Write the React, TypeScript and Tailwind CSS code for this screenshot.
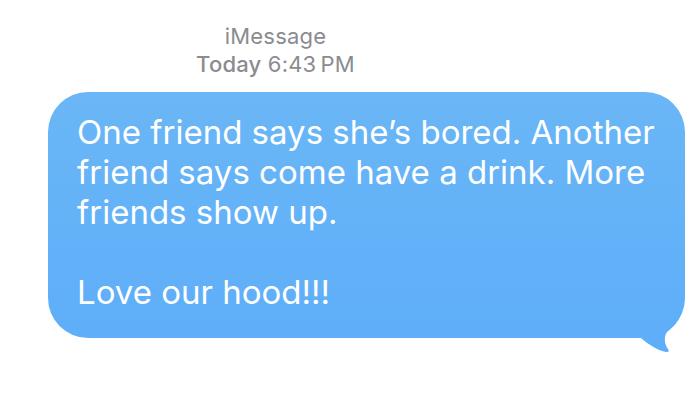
function BubbleTail() {
  return (
    <svg
      className="absolute left-[580px] top-[190px]"
      width="60"
      height="75"
      viewBox="0 0 60 75"
    >
      <defs>
        <linearGradient
          id="tailFill"
          gradientUnits="userSpaceOnUse"
          x1="0"
          y1="-190"
          x2="0"
          y2="56"
        >
          <stop offset="0" stopColor="#6ab6f6" />
          <stop offset="1" stopColor="#5eaef9" />
        </linearGradient>
      </defs>
      <path
        d="M0 0 H57 V8 C57 30 50 42 39 50 C36 54 36 62 40 67 C41.5 69 40.5 70.5 38 70 C30 68.5 21 63 13 56 H0 Z"
        fill="url(#tailFill)"
      />
    </svg>
  );
}

export default function App() {
  return (
    <div className="min-h-screen w-full bg-white font-['Inter',sans-serif]">
      <div className="flex w-[551px] flex-col items-center pt-[22px] text-[22px] leading-[28px] tracking-[0.2px] text-[#8b8b90]">
        <div>iMessage</div>
        <div>
          <span className="font-medium">Today</span> 6:43&#8201;PM
        </div>
      </div>
      <div className="relative ml-[48px] mt-[14px] h-[246px] w-[637px] rounded-[40px] bg-gradient-to-b from-[#6ab6f6] to-[#5eaef9] pl-[29px] pr-[20px] pt-[20px] text-[33px] leading-[40px] text-white">
        <BubbleTail />
        <p className="relative">
          One friend says she’s bored. Another friend says come have a drink.
          More friends show up.
        </p>
        <p className="relative mt-[40px]">Love our hood!!!</p>
      </div>
    </div>
  );
}
